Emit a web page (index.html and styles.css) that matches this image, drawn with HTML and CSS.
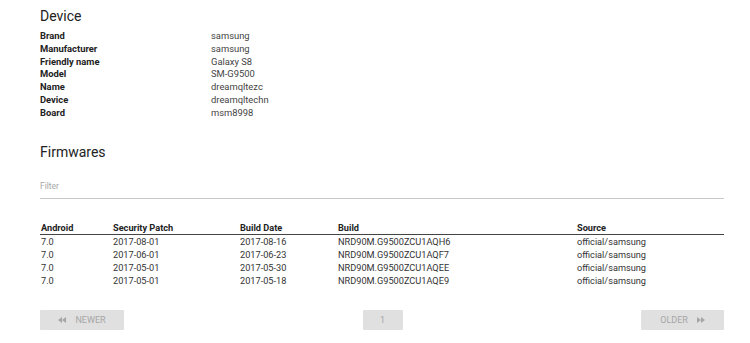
FILE: index.html
```html
<!DOCTYPE html>
<html>
<head>
<meta charset="utf-8">
<link rel="stylesheet" href="styles.css">
</head>
<body>
<div class="page">
  <h2 class="title">Device</h2>
  <dl class="props">
    <dt>Brand</dt><dd>samsung</dd>
    <dt>Manufacturer</dt><dd>samsung</dd>
    <dt>Friendly name</dt><dd>Galaxy S8</dd>
    <dt>Model</dt><dd>SM-G9500</dd>
    <dt>Name</dt><dd>dreamqltezc</dd>
    <dt>Device</dt><dd>dreamqltechn</dd>
    <dt>Board</dt><dd>msm8998</dd>
  </dl>
  <h2 class="title fw">Firmwares</h2>
  <div class="filter"><span>Filter</span></div>
  <table class="fwt">
    <thead>
      <tr><th class="c1">Android</th><th class="c2">Security Patch</th><th class="c3">Build Date</th><th class="c4">Build</th><th>Source</th></tr>
    </thead>
    <tbody>
      <tr><td>7.0</td><td>2017-08-01</td><td>2017-08-16</td><td>NRD90M.G9500ZCU1AQH6</td><td>official/samsung</td></tr>
      <tr><td>7.0</td><td>2017-06-01</td><td>2017-06-23</td><td>NRD90M.G9500ZCU1AQF7</td><td>official/samsung</td></tr>
      <tr><td>7.0</td><td>2017-05-01</td><td>2017-05-30</td><td>NRD90M.G9500ZCU1AQEE</td><td>official/samsung</td></tr>
      <tr><td>7.0</td><td>2017-05-01</td><td>2017-05-18</td><td>NRD90M.G9500ZCU1AQE9</td><td>official/samsung</td></tr>
    </tbody>
  </table>
  <div class="pager">
    <button class="btn newer"><svg width="8" height="6" viewBox="0 0 8 6"><path d="M4 0L0 3L4 6Z M8 0L4 3L8 6Z" fill="#a6a6a6"/></svg><span>NEWER</span></button>
    <button class="btn num">1</button>
    <button class="btn older"><span>OLDER</span><svg width="8" height="6" viewBox="0 0 8 6"><path d="M0 0L4 3L0 6Z M4 0L8 3L4 6Z" fill="#a6a6a6"/></svg></button>
  </div>
</div>
</body>
</html>
```
FILE: styles.css
```css
html, body { margin: 0; padding: 0; background: #fff; }
body { font-family: Roboto, "Liberation Sans", sans-serif; color: #222; }
.page { width: 684px; padding: 0 0 0 40px; }
.title { font-size: 14px; font-weight: 400; line-height: 20px; margin: 0; padding-top: 6px; color: #222; }
.props { display: grid; grid-template-columns: 171px 1fr; margin: 4px 0 0 0; font-size: 9.4px; line-height: 12.75px; }
.props dt { font-weight: 700; color: #222; margin: 0; }
.props dd { margin: 0; color: #444; }
.title.fw { padding-top: 23px; }
.filter { margin-top: 18px; height: 18px; border-bottom: 1px solid #c8c8c8; font-size: 8.5px; color: #a8a8a8; line-height: 12px; }
.fwt { width: 684px; border-collapse: collapse; margin-top: 23px; font-size: 9.2px; color: #333; }
.fwt th { text-align: left; font-weight: 700; color: #222; padding: 0 1px; line-height: 12px; border-bottom: 1px solid #444; }
.fwt td { padding: 0 1px; line-height: 13px; }
.fwt .c1 { width: 70px; }
.fwt .c2 { width: 125px; }
.fwt .c3 { width: 96px; }
.fwt .c4 { width: 237px; }
.pager { display: flex; justify-content: space-between; margin-top: 23px; }
.btn { height: 20px; border: none; background: #e0e0e0; color: #a6a6a6; font-family: Roboto, "Liberation Sans", sans-serif; font-size: 9px; display: flex; align-items: center; justify-content: center; gap: 9px; padding: 0; border-radius: 1px; }
.newer { width: 84px; }
.num { width: 40px; }
.older { width: 83px; }
```
